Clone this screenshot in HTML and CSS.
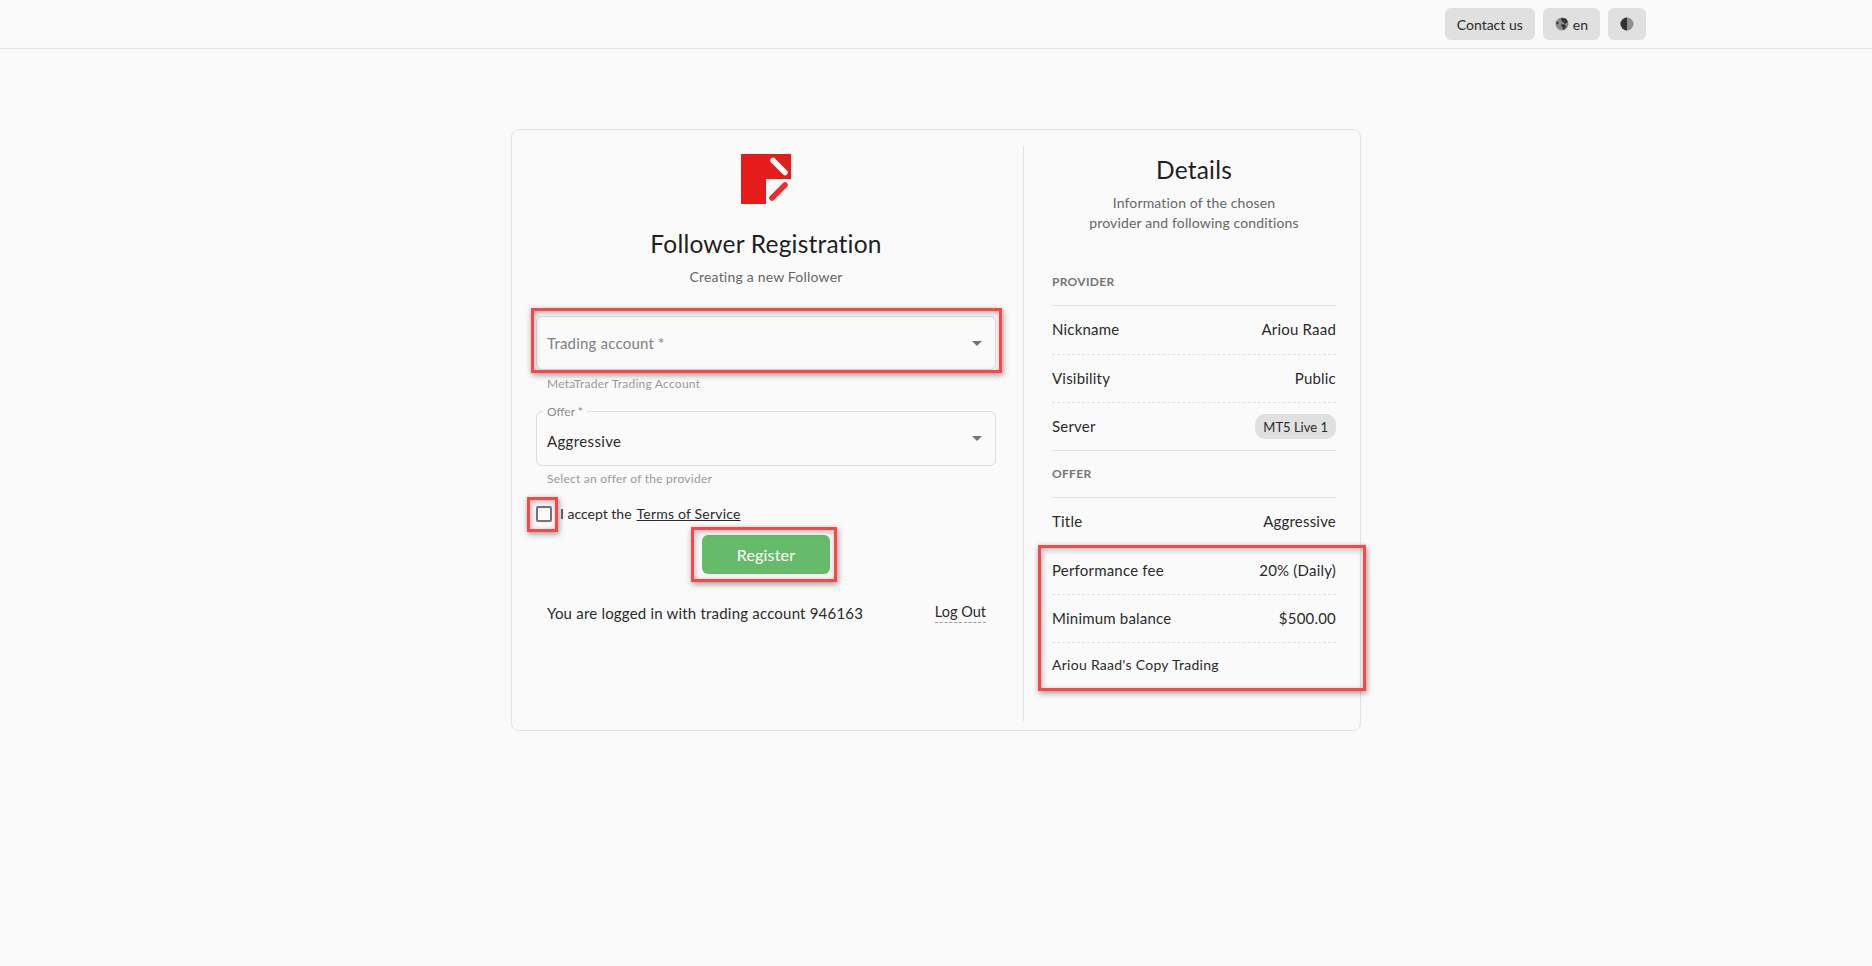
FILE: index.html
```html
<!DOCTYPE html>
<html lang="en">

<head>
    <meta charset="UTF-8" />
    <meta name="viewport" content="width=device-width, initial-scale=1.0" />
    <title>Follower Registration</title>
    <link rel="stylesheet" href="styles.css">
</head>

<body>
    <header class="header">
        <div class="header-inner">
            <button class="top-btn">Contact us</button>
            <button class="top-btn">
                <svg class="top-icon" viewBox="0 0 14 14">
                    <circle cx="7" cy="7" r="6.5" fill="#8a8a8a" />
                    <path d="M6 1 L11 1.5 L13 5 L10 7 L8 5 L6.5 4 Z M7 7 L10.5 8 L11 10 L8.5 13 L7.5 10 L6 8.5 Z M1 5 L3 4.5 L3.5 6.5 L2 7.5 Z" fill="#333" />
                </svg>
                en
            </button>
            <button class="top-btn">
                <svg class="top-icon" viewBox="0 0 14 14">
                    <circle cx="7" cy="7" r="6.5" fill="#8f8f8f" />
                    <path d="M7 .5 A6.5 6.5 0 0 0 7 13.5 Z" fill="#333" />
                </svg>
            </button>
        </div>
    </header>

    <main class="card">
        <section class="form-col">
            <svg class="logo" viewBox="0 0 50 50">
                <rect width="50" height="50" fill="#e51c1c" />
                <rect x="25" y="25" width="25" height="25" fill="#fafafa" />
                <path d="M32 6.5 L44 18.5" stroke="#fafafa" stroke-width="5.5" stroke-linecap="round" />
                <path d="M31 44 L44 31" stroke="#ee2a2e" stroke-width="5.5" stroke-linecap="round" />
            </svg>
            <h1 class="title">Follower Registration</h1>
            <p class="subtitle">Creating a new Follower</p>

            <div class="field field-first">
                <span class="placeholder">Trading account *</span>
                <span class="arrow"></span>
            </div>
            <p class="hint">MetaTrader Trading Account</p>

            <div class="field field-second">
                <span class="float-label">Offer *</span>
                <span class="value">Aggressive</span>
                <span class="arrow"></span>
            </div>
            <p class="hint hint-second">Select an offer of the provider</p>

            <div class="accept">
                <span class="checkbox"></span>
                <span>I accept the</span>
                <a href="#" class="terms">Terms of Service</a>
            </div>

            <button class="register">Register</button>

            <div class="logged">
                <span>You are logged in with trading account 946163</span>
                <a href="#" class="logout">Log Out</a>
            </div>
        </section>

        <aside class="details-col">
            <h2 class="title">Details</h2>
            <p class="details-sub">Information of the chosen<br>provider and following conditions</p>

            <div class="group-head">PROVIDER</div>
            <div class="row"><span>Nickname</span><span>Ariou Raad</span></div>
            <div class="row"><span>Visibility</span><span>Public</span></div>
            <div class="row row-last"><span>Server</span><span class="chip">MT5 Live 1</span></div>

            <div class="group-head group-offer">OFFER</div>
            <div class="row"><span>Title</span><span>Aggressive</span></div>
            <div class="row"><span>Performance fee</span><span>20% (Daily)</span></div>
            <div class="row"><span>Minimum balance</span><span>$500.00</span></div>
            <div class="row-note">Ariou Raad's Copy Trading</div>
        </aside>

        <!-- red annotation boxes drawn over the form -->
        <div class="mark mark-account"></div>
        <div class="mark mark-check"></div>
        <div class="mark mark-register"></div>
        <div class="mark mark-fees"></div>
    </main>
</body>

</html>
```

FILE: styles.css
```css
* {
    box-sizing: border-box;
    margin: 0;
    padding: 0;
}

body {
    font-family: 'Lato', 'Open Sans', sans-serif;
    font-size: 15px;
    letter-spacing: 0.2px;
    background-color: #fafafa;
    color: #2a2a2a;
    min-height: 966px;
}

.header {
    height: 49px;
    border-bottom: 1px solid #e0e0e6;
}

.header-inner {
    max-width: 1420px;
    margin: 0 auto;
    padding-top: 8px;
    display: flex;
    justify-content: flex-end;
    gap: 8px;
}

.top-btn {
    height: 32px;
    padding: 0 12px;
    display: flex;
    align-items: center;
    gap: 4px;
    background-color: #e0e0e0;
    border: none;
    border-radius: 6px;
    color: #2a2a2a;
    font-family: inherit;
    font-size: 14px;
}

.top-icon {
    width: 14px;
    height: 14px;
}

.card {
    position: relative;
    width: 850px;
    height: 602px;
    margin: 80px auto 0;
    padding: 16px 0 9px;
    display: flex;
    border: 1px solid #e0e0e6;
    border-radius: 8px;
}

.form-col {
    width: 511px;
    padding: 8px 27px 0 24px;
    display: flex;
    flex-direction: column;
}

.logo {
    width: 50px;
    height: 50px;
    align-self: center;
}

.title {
    font-size: 24.5px;
    font-weight: 400;
    line-height: 32px;
    text-align: center;
    color: #1f1f1f;
}

.form-col .title {
    margin-top: 24px;
}

.subtitle {
    margin-top: 7px;
    font-size: 14px;
    line-height: 20px;
    text-align: center;
    color: #666;
}

.field {
    position: relative;
    height: 55px;
    padding: 0 10px;
    display: flex;
    align-items: center;
    border: 1px solid #dcdce2;
    border-radius: 6px;
}

.field-first {
    height: 54px;
    margin-top: 29px;
}

.field-second {
    margin-top: 19px;
    padding-top: 5px;
}

.placeholder {
    font-size: 15px;
    color: #808080;
}

.value {
    font-size: 15px;
    letter-spacing: 0.35px;
}

.float-label {
    position: absolute;
    left: 6px;
    top: -7px;
    padding: 0 4px;
    font-size: 12px;
    line-height: 14px;
    letter-spacing: 0;
    color: #8a8a8a;
    background-color: #fafafa;
}

.arrow {
    position: absolute;
    right: 13px;
    top: 24px;
    border-left: 5px solid transparent;
    border-right: 5px solid transparent;
    border-top: 5px solid #757575;
}

.hint {
    margin-top: 6px;
    padding-left: 11px;
    font-size: 12px;
    line-height: 16px;
    letter-spacing: 0.25px;
    color: #999;
}

.hint-second {
    margin-top: 5px;
}

.accept {
    margin-top: 16px;
    display: flex;
    align-items: center;
    gap: 5px;
    height: 20px;
    font-size: 14px;
    letter-spacing: 0;
}

.checkbox {
    width: 16px;
    height: 16px;
    margin: 2px 3px 0 0;
    border: 2px solid #757575;
    border-radius: 2px;
}

.terms {
    color: #2a2a2a;
    letter-spacing: 0.2px;
}

.register {
    width: 128px;
    height: 39px;
    margin-top: 12px;
    align-self: center;
    background-color: #66bb6a;
    border: none;
    border-radius: 6px;
    color: #fff;
    font-family: inherit;
    font-size: 16px;
    letter-spacing: 0.2px;
}

.logged {
    margin-top: 29px;
    padding: 0 10px 0 11px;
    display: flex;
    justify-content: space-between;
    align-items: flex-start;
    line-height: 20px;
}

.logout {
    color: #2a2a2a;
    text-decoration: none;
    font-size: 14.5px;
    letter-spacing: 0;
    line-height: 18px;
    padding-bottom: 1px;
    border-bottom: 1px dashed #999;
}

.details-col {
    flex: 1;
    padding: 8px 24px 0 28px;
    border-left: 1px solid #e0e0e6;
}

.details-sub {
    margin-top: 7px;
    font-size: 14px;
    line-height: 20px;
    letter-spacing: 0.15px;
    text-align: center;
    color: #666;
}

.group-head {
    height: 49px;
    margin-top: 24px;
    padding-top: 17px;
    font-size: 12px;
    font-weight: 700;
    line-height: 16px;
    letter-spacing: 0.3px;
    color: #757575;
    border-bottom: 1px solid #e0e0e6;
}

.group-offer {
    height: 47px;
    margin-top: 0;
    padding-top: 15px;
}

.row {
    height: 48px;
    padding-bottom: 2px;
    display: flex;
    justify-content: space-between;
    align-items: center;
    border-bottom: 1px dashed #e0e0e0;
}

.group-head + .row {
    height: 49px;
}

.row-last {
    padding-bottom: 0;
    border-bottom: 1px solid #e0e0e6;
}

.row-last > span:first-child {
    padding-bottom: 2px;
}

.chip {
    padding: 0 8px;
    height: 25px;
    display: flex;
    align-items: center;
    background-color: #e0e0e0;
    border-radius: 10px;
    font-size: 13px;
    letter-spacing: 0;
}

.row-note {
    padding-top: 13px;
    font-size: 14px;
    line-height: 18px;
    letter-spacing: 0.28px;
}

.mark {
    position: absolute;
    border: 3px solid #ff4444;
    box-shadow: 1px 2px 6px rgba(0, 0, 0, 0.4), inset 1px 2px 6px rgba(0, 0, 0, 0.25);
    pointer-events: none;
}

.mark-account {
    left: 19px;
    top: 178px;
    width: 471px;
    height: 65px;
}

.mark-check {
    left: 15px;
    top: 367px;
    width: 31px;
    height: 35px;
}

.mark-register {
    left: 179px;
    top: 397px;
    width: 146px;
    height: 55px;
}

.mark-fees {
    left: 526px;
    top: 415px;
    width: 328px;
    height: 146px;
}
```
